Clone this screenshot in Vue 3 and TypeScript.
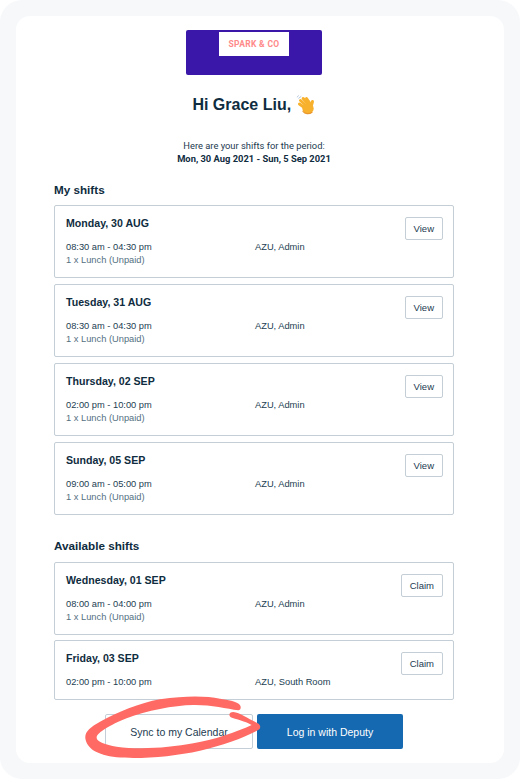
<script setup lang="ts">
interface Shift { day: string; time: string; area: string; note?: string; action: string }
const mine: Shift[] = [
  { day: 'Monday, 30 AUG', time: '08:30 am - 04:30 pm', area: 'AZU, Admin', note: '1 x Lunch (Unpaid)', action: 'View' },
  { day: 'Tuesday, 31 AUG', time: '08:30 am - 04:30 pm', area: 'AZU, Admin', note: '1 x Lunch (Unpaid)', action: 'View' },
  { day: 'Thursday, 02 SEP', time: '02:00 pm - 10:00 pm', area: 'AZU, Admin', note: '1 x Lunch (Unpaid)', action: 'View' },
  { day: 'Sunday, 05 SEP', time: '09:00 am - 05:00 pm', area: 'AZU, Admin', note: '1 x Lunch (Unpaid)', action: 'View' },
]
const available: Shift[] = [
  { day: 'Wednesday, 01 SEP', time: '08:00 am - 04:00 pm', area: 'AZU, Admin', note: '1 x Lunch (Unpaid)', action: 'Claim' },
  { day: 'Friday, 03 SEP', time: '02:00 pm - 10:00 pm', area: 'AZU, South Room', action: 'Claim' },
]
const groups = [
  { title: 'My shifts', shifts: mine },
  { title: 'Available shifts', shifts: available },
]
</script>

<template>
  <div class="frame">
    <main class="sheet">
      <div class="logo"><div class="logo-inner">SPARK &amp; CO</div></div>
      <h1 class="hello">
        Hi Grace Liu,
        <svg class="wave" viewBox="0 0 20 20" aria-hidden="true">
          <g fill="none" stroke="#f8b12c" stroke-width="3" stroke-linecap="round">
            <path d="M9 13 3.500 9" />
            <path d="M10 10.500 4.500 5.500" />
            <path d="M12 9 7.200 3.500" />
            <path d="M14 8.500 10.500 3.500" />
            <path d="M15 12 16.500 6.500" />
          </g>
          <ellipse cx="12" cy="13.500" rx="5.700" ry="5.200" fill="#f8b12c" />
          <path d="M7 16.500c2 2.500 6 3 9 .8" fill="none" stroke="#e8952a" stroke-width="1.200" stroke-linecap="round" />
          <path d="M5 1.500 2.800 3.200M2.500 .8 1.200 2" fill="none" stroke="#b4c8de" stroke-width="1" stroke-linecap="round" />
        </svg>
      </h1>
      <p class="period">Here are your shifts for the period:<br /><b>Mon, 30 Aug 2021 - Sun, 5 Sep 2021</b></p>

      <section v-for="g in groups" :key="g.title" class="group">
        <h2 class="group-title">{{ g.title }}</h2>
        <div class="list">
          <article v-for="s in g.shifts" :key="s.day" class="shift">
            <div class="shift-head">
              <h3 class="day">{{ s.day }}</h3>
              <button class="action">{{ s.action }}</button>
            </div>
            <div class="details">
              <span class="time">{{ s.time }}</span>
              <span class="area">{{ s.area }}</span>
            </div>
            <div v-if="s.note" class="note">{{ s.note }}</div>
          </article>
        </div>
      </section>

      <div class="buttons">
        <button class="btn ghost">Sync to my Calendar</button>
        <button class="btn solid">Log in with Deputy</button>
        <svg class="scribble" viewBox="0 0 360 99" aria-hidden="true">
          <g transform="scale(0.3333)">
            <path fill="#ff6b64" d="M542 80C540 68 520 62 480 56C440 48 380 46 300 58C240 68 170 98 120 125C90 142 74 155 76 175C80 205 110 225 170 232C240 238 340 230 420 212C490 196 560 170 598 148C604 140 600 132 590 128C565 116 540 98 520 96C506 96 504 108 516 113C540 120 565 128 575 135C530 156 460 180 400 190C330 203 240 210 170 200C135 194 108 184 110 172C112 158 150 135 200 115C260 92 340 76 400 75C450 74 500 86 535 91C540 90 543 86 542 80Z" />
          </g>
        </svg>
      </div>
    </main>
  </div>
</template>

<style>
html, body { margin: 0; background: #fff; }
</style>

<style scoped>
.frame {
  width: 520px;
  height: 779px;
  box-sizing: border-box;
  padding: 16px;
  background: #f7f8fa;
  border-radius: 22px;
  font-family: "Liberation Sans", Arial, sans-serif;
  color: #0f2c40;
}
.sheet {
  height: 747px;
  box-sizing: border-box;
  padding: 14px 50px 0 38px;
  background: #fff;
  border-radius: 14px;
  display: flex;
  flex-direction: column;
}
.logo {
  align-self: center;
  width: 136px;
  height: 45px;
  box-sizing: border-box;
  padding-top: 2px;
  background: #3a17a8;
  border-radius: 2px;
  display: flex;
  justify-content: center;
  align-items: flex-start;
}
.logo-inner {
  width: 70px;
  height: 24px;
  background: #fff;
  color: #ff8a8a;
  font-family: Roboto, sans-serif;
  font-size: 8.500px;
  letter-spacing: 0.3px;
  font-weight: 700;
  line-height: 24px;
  text-align: center;
}
.hello {
  margin: 20px 0 0;
  height: 20px;
  font-size: 16px;
  line-height: 20px;
  font-weight: 700;
  text-align: center;
  color: #0f2c40;
}
.wave { width: 20px; height: 20px; vertical-align: -5px; }
.period {
  margin: 24px 0 0;
  font-family: Roboto, sans-serif;
  font-size: 9.350px;
  line-height: 13px;
  text-align: center;
  color: #1c3a50;
}
.period b { color: #0f2c40; }
.group { margin-top: 18px; }
.group + .group { margin-top: 24px; }
.group-title {
  margin: 0 0 8px;
  font-size: 11.700px;
  line-height: 14px;
  font-weight: 700;
  color: #0f2c40;
}
.group + .group .group-title { margin-bottom: 9px; }
.list { display: flex; flex-direction: column; gap: 6px; }
.group + .group .list { gap: 5px; }
.shift {
  position: relative;
  box-sizing: border-box;
  min-height: 60px;
  padding: 10px 10px 11px 11px;
  border: 1px solid #c3ced6;
  border-radius: 2px;
  background: #fff;
}
.shift-head {
  display: flex;
  justify-content: space-between;
  align-items: flex-start;
  height: 22px;
}
.day {
  margin: 0;
  font-size: 10.600px;
  line-height: 14px;
  font-weight: 700;
  color: #0f2c40;
}
.action {
  margin-top: 1px;
  height: 23px;
  padding: 0 8px;
  border: 1px solid #c3ced6;
  border-radius: 2px;
  background: #fff;
  font: 9.500px "Liberation Sans", Arial, sans-serif;
  color: #1c3a50;
}
.details {
  display: flex;
  margin-top: 3px;
  font-size: 9.300px;
  line-height: 12px;
  color: #223e52;
}
.time { width: 189px; }
.note {
  margin-top: 1px;
  font-size: 9.300px;
  line-height: 12px;
  color: #54707f;
}
.buttons {
  position: relative;
  display: flex;
  justify-content: center;
  gap: 4px;
  margin-top: 14px;
}
.btn {
  height: 35px;
  box-sizing: border-box;
  border-radius: 2px;
  font: 10.500px "Liberation Sans", Arial, sans-serif;
}
.ghost {
  width: 148px;
  border: 1px solid #c3ced6;
  background: #fff;
  color: #1c3a50;
}
.solid {
  width: 146px;
  border: 0;
  background: #1569b0;
  color: #fff;
}
.scribble {
  position: absolute;
  left: 6px;
  top: -34px;
  width: 360px;
  height: 99px;
  pointer-events: none;
}
</style>
